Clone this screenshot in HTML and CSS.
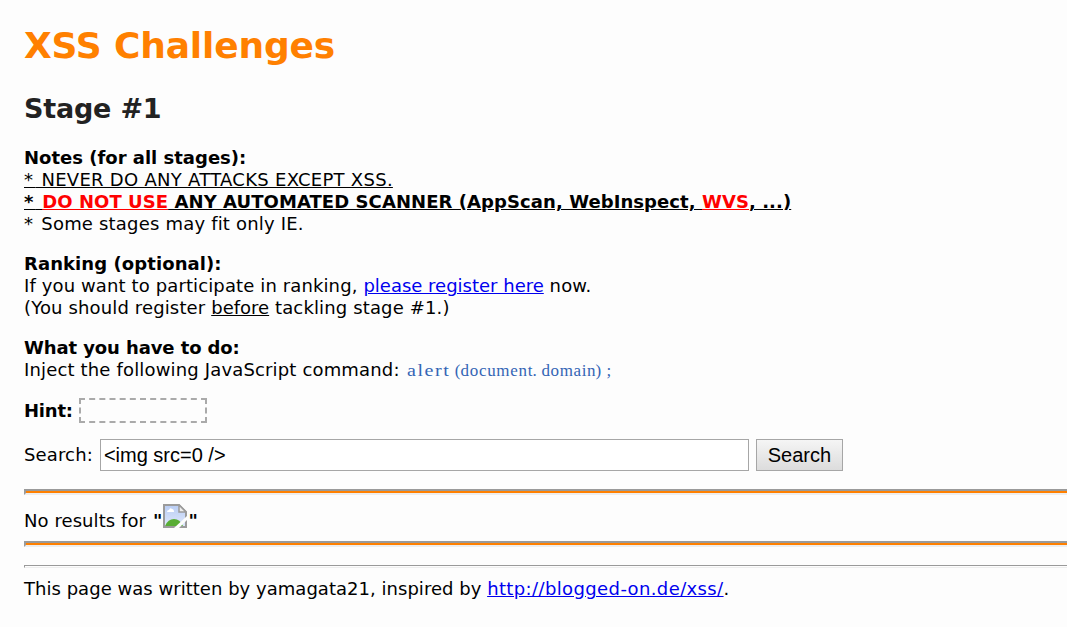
FILE: index.html
```
<!DOCTYPE html>
<html lang="en">
<head>
<meta charset="utf-8">
<title>XSS Challenges</title>
<link rel="stylesheet" href="styles.css">
</head>
<body>
<main class="page">
<h1 class="title">XSS Challenges</h1>
<h2 class="stage">Stage #1</h2>
<section class="block notes">
<p class="line bold">Notes (for all stages):</p>
<p class="line never"><u><span class="star">*</span> NEVER DO ANY ATTACKS EXCEPT XSS.</u></p>
<p class="line bold scanner"><u><span class="star">*</span> <u class="red">DO NOT USE</u> ANY AUTOMATED SCANNER (AppScan, WebInspect, <u class="red">WVS</u>, ...)</u></p>
<p class="line some"><span class="star">*</span> Some stages may fit only IE.</p>
</section>
<section class="block">
<p class="line bold ranking">Ranking (optional):</p>
<p class="line participate">If you want to participate in ranking, <a class="register" href="#">please register here</a> now.</p>
<p class="line before">(You should register <u>before</u> tackling stage #1.)</p>
</section>
<section class="block">
<p class="line bold task">What you have to do:</p>
<p class="line inject">Inject the following JavaScript command: <code class="code"><span class="word alert">alert</span><span class="sign open">(</span><span class="word document">document</span><span class="sign">.</span><span class="word domain">domain</span><span class="sign">)</span><span class="sign semi">;</span></code></p>
</section>
<div class="hint"><b>Hint:</b><span class="hint-box"></span></div>
<form class="search"><label for="q">Search:</label><input class="field" id="q" type="text" value="&lt;img src=0 /&gt;"><button class="button" type="button">Search</button></form>
<hr class="rule">
<div class="results"><span>No results for</span><b class="quote">"</b><svg class="broken" viewBox="0 0 24 24"><defs><linearGradient id="sky" x2="0" y2="1"><stop offset="0" stop-color="#b9cdf4"/><stop offset="1" stop-color="#dfe8fb"/></linearGradient></defs><path d="M1 1h15l7 7v15H1z" fill="url(#sky)"/><path d="M4 8q0-2 2-2 1-3 3-1 2 0 2 3z" fill="#fff"/><path d="M2 22q3-7 9-7 6 0 9 7z" fill="#59ad35"/><path d="M1 1h15l7 7v15H1z" fill="none" stroke="#9b9b9b" stroke-width="2"/><path d="M16 1v7h7z" fill="#eee" stroke="#9b9b9b" stroke-width="1.5"/><path d="M11 24 24 12v4L16 24z" fill="#fdfdfd"/></svg><b class="end-quote">"</b></div>
<hr class="rule">
<hr class="thin">
<footer class="footer">This page was written by yamagata21, inspired by <a class="site" href="#">http://blogged-on.de/xss/</a>.</footer>
</main>
</body>
</html>
```
FILE: styles.css
```
body { margin: 0; background: #fdfdfd; color: #000; overflow: hidden; font: 18px/22px Verdana, "DejaVu Sans", sans-serif; }
.page { padding: 24px 0 0 24px; white-space: nowrap; }
.title { margin: 0; font-size: 36px; line-height: 44px; letter-spacing: -0.15px; color: #ff8000; }
.stage { margin: 24px 0 0; font-size: 27px; line-height: 33px; letter-spacing: -0.2px; color: #222; }
.block { margin: 18px 0 17px; }
.block + .block { margin-top: 18px; }
.notes { margin-top: 22px; }
.line { margin: 0; height: 22px; }
.bold { font-weight: bold; }
.star { letter-spacing: 2.4px; }
.red { color: #f00; }
a { color: #00e; }
.never { letter-spacing: 0.28px; }
.scanner { letter-spacing: 0.07px; }
.some { letter-spacing: 0.19px; }
.ranking { letter-spacing: 0.08px; }
.participate { letter-spacing: 0.12px; }
.before { letter-spacing: 0.14px; }
.register, .before u { letter-spacing: 0; }
.task { letter-spacing: -0.1px; }
.inject { letter-spacing: 0.16px; }
.code { display: inline-flex; height: 22px; margin-left: 1px; font: 17px/22px "Liberation Serif", serif; color: #3465b5; }
.word { transform-origin: left; }
.alert { width: 45px; letter-spacing: 1.3px; transform: scaleX(1.18); }
.document { width: 72px; letter-spacing: 0.7px; }
.domain { width: 54px; letter-spacing: 0.6px; }
.sign { width: 9px; }
.open { text-align: right; }
.semi { text-indent: 2px; }
.hint { display: flex; align-items: center; height: 25px; gap: 6px; letter-spacing: -0.2px; }
.hint-box { box-sizing: border-box; width: 128px; height: 25px; border: 2px dashed #aaa; }
.search { display: flex; align-items: center; margin: 16px 0 0; gap: 7px; letter-spacing: 0.14px; }
.field { box-sizing: border-box; width: 649px; height: 32px; border: 1px solid #a6a6a6; padding: 0 3px; font: 20px "Liberation Sans", sans-serif; }
.button { width: 87px; height: 32px; border: 1px solid #a6a6a6; padding: 0; background: linear-gradient(#f5f5f5, #dcdcdc); font: 20px "Liberation Sans", sans-serif; }
.rule { box-sizing: border-box; margin: 18px 0 0; height: 6px; border: solid; border-width: 2px 0 2px 2px; border-color: #9a9a9a #eee #eee #9a9a9a; background: #ff8000 padding-box; }
.results { display: flex; align-items: flex-start; height: 28px; line-height: 22px; padding-top: 15px; box-sizing: border-box; letter-spacing: 0.07px; }
.results + .rule { margin-top: 18px; }
.quote { margin-left: 7px; }
.end-quote { margin-left: 1px; }
.broken { width: 24px; height: 24px; margin: -6px 0 0 1px; }
.thin { box-sizing: border-box; margin: 18px 0 0; border: solid; border-width: 1px 0 1px 1px; border-color: #9a9a9a #eee #eee #9a9a9a; height: 3px; }
.footer { margin-top: 10px; letter-spacing: 0.03px; }
.site { letter-spacing: 0.38px; }
```
